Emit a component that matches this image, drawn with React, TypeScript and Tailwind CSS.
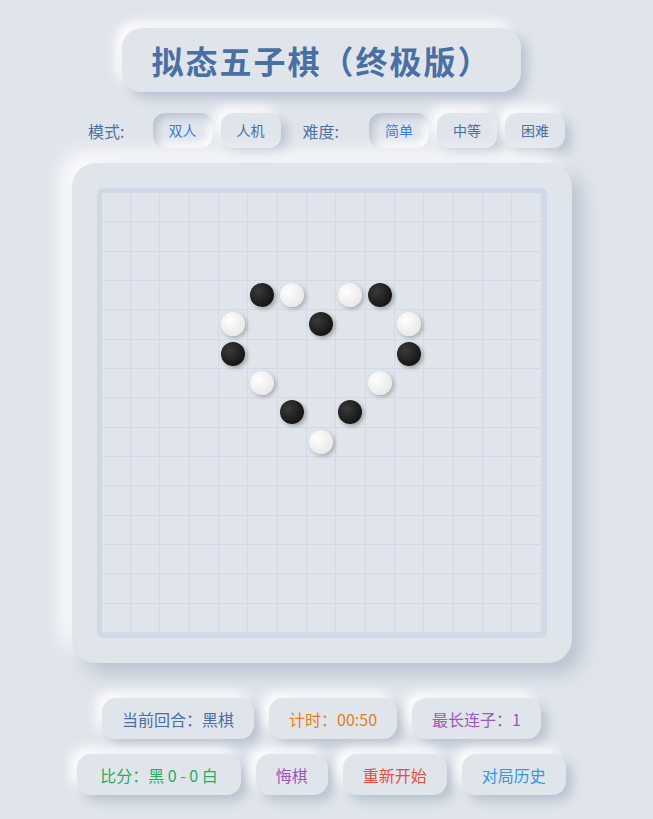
import React from "react";

const SIZE = 15;

// [row, col, color]
const STONES: [number, number, "b" | "w"][] = [
  [3, 5, "b"],
  [3, 6, "w"],
  [3, 8, "w"],
  [3, 9, "b"],
  [4, 4, "w"],
  [4, 7, "b"],
  [4, 10, "w"],
  [5, 4, "b"],
  [5, 10, "b"],
  [6, 5, "w"],
  [6, 9, "w"],
  [7, 6, "b"],
  [7, 8, "b"],
  [8, 7, "w"],
];

const raised = "shadow-[6px_6px_12px_#b8c1cf,-6px_-6px_12px_#ffffff]";
const pressed = "shadow-[inset_4px_4px_8px_#b8c1cf,inset_-4px_-4px_8px_#ffffff]";

function Chip({
  children,
  active,
  className = "",
}: {
  children: React.ReactNode;
  active?: boolean;
  className?: string;
}) {
  return (
    <button
      type="button"
      className={`h-[35px] w-[60px] rounded-[12px] bg-[#e0e5ec] text-[14px] ${
        active ? `${pressed} text-[#3b7dd8]` : `${raised} text-[#4a6fa5]`
      } ${className}`}
    >
      {children}
    </button>
  );
}

function Pill({
  children,
  className = "",
}: {
  children: React.ReactNode;
  className?: string;
}) {
  return (
    <div
      className={`flex h-[41px] items-center justify-center rounded-[14px] bg-[#e0e5ec] px-5 text-[16px] ${raised} ${className}`}
    >
      {children}
    </div>
  );
}

function Stone({ color }: { color: "b" | "w" }) {
  return color === "b" ? (
    <div className="h-[24px] w-[24px] rounded-full bg-[radial-gradient(circle_at_35%_35%,#3a3a3a,#161616_70%)] shadow-[2px_2px_4px_rgba(0,0,0,0.3)]" />
  ) : (
    <div className="h-[24px] w-[24px] rounded-full bg-[radial-gradient(circle_at_35%_35%,#ffffff,#e8e8e8_75%)] shadow-[2px_2px_4px_rgba(0,0,0,0.25)]" />
  );
}

function Board() {
  const map = new Map<string, "b" | "w">();
  STONES.forEach(([r, c, s]) => map.set(`${r}-${c}`, s));
  const cells = [];
  for (let r = 0; r < SIZE; r++) {
    for (let c = 0; c < SIZE; c++) {
      const s = map.get(`${r}-${c}`);
      cells.push(
        <div
          key={`${r}-${c}`}
          className="flex items-center justify-center border-r border-b border-[#d3d9e6]"
        >
          {s && <Stone color={s} />}
        </div>
      );
    }
  }
  return (
    <div className="rounded-[24px] bg-[#e0e5ec] p-[25px] shadow-[10px_10px_20px_#b8c1cf,-10px_-10px_20px_#ffffff]">
      <div className="rounded-[6px] border-[5px] border-[#d1d9e6] bg-[#e0e5ec]">
        <div className="grid h-[440px] w-[440px] grid-cols-[repeat(15,1fr)] grid-rows-[repeat(15,1fr)]">
          {cells}
        </div>
      </div>
    </div>
  );
}

export default function App() {
  return (
    <div
      className="flex min-h-[819px] w-full flex-col items-center bg-[#e0e5ec] pt-[28px]"
      style={{ fontFamily: '"Noto Sans CJK SC", "Noto Sans", sans-serif' }}
    >
      <div
        className={`mr-[10px] flex h-[64px] w-[399px] items-center justify-center rounded-[20px] bg-[#e0e5ec] ${raised}`}
      >
        <h1 className="text-[32px] font-bold tracking-[2px] text-[#4a6fa5]">
          拟态五子棋（终极版）
        </h1>
      </div>

      <div className="mt-[21px] flex items-center">
        <span className="mr-[28px] text-[16px] text-[#4a6fa5]">模式:</span>
        <Chip active>双人</Chip>
        <Chip className="ml-[8px]">人机</Chip>
        <span className="mr-[30px] ml-[22px] text-[16px] text-[#4a6fa5]">难度:</span>
        <Chip active>简单</Chip>
        <Chip className="ml-[8px]">中等</Chip>
        <Chip className="ml-[8px]">困难</Chip>
      </div>

      <div className="mt-[15px] mr-[10px]">
        <Board />
      </div>

      <div className="mt-[35px] mr-[10px] flex gap-[15px]">
        <Pill className="text-[#4a6fa5]">当前回合：黑棋</Pill>
        <Pill className="text-[#e67e22]">计时：00:50</Pill>
        <Pill className="text-[#9b59b6]">最长连子：1</Pill>
      </div>
      <div className="mt-[15px] mr-[10px] flex gap-[15px]">
        <Pill className="px-[23px] text-[#27ae60]">比分：黑 0 - 0 白</Pill>
        <Pill className="text-[#9b59b6]">悔棋</Pill>
        <Pill className="text-[#e74c3c]">重新开始</Pill>
        <Pill className="text-[#3498db]">对局历史</Pill>
      </div>
    </div>
  );
}
